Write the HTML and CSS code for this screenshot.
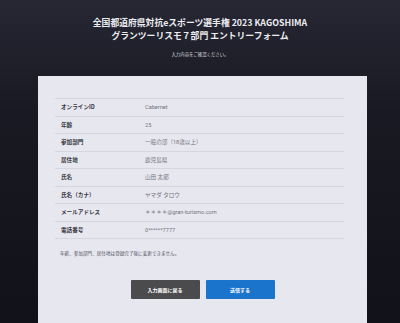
FILE: index.html
```html
<!DOCTYPE html>
<html lang="ja">
<head>
<meta charset="utf-8">
<title>エントリーフォーム 確認</title>
<link rel="stylesheet" href="styles.css">
</head>
<body>
<div class="page">
  <header class="head">
    <h1 class="title">全国都道府県対抗eスポーツ選手権 2023 KAGOSHIMA<br>グランツーリスモ７部門 エントリーフォーム</h1>
    <p class="lead">入力内容をご確認ください。</p>
  </header>
  <main class="card">
    <dl class="table">
      <div class="row"><dt>オンラインID</dt><dd>Cabernet</dd></div>
      <div class="row"><dt>年齢</dt><dd>25</dd></div>
      <div class="row"><dt>参加部門</dt><dd>一般の部（18歳以上）</dd></div>
      <div class="row"><dt>居住地</dt><dd>鹿児島県</dd></div>
      <div class="row"><dt>氏名</dt><dd>山田 太郎</dd></div>
      <div class="row"><dt>氏名（カナ）</dt><dd>ヤマダ タロウ</dd></div>
      <div class="row"><dt>メールアドレス</dt><dd>＊＊＊＊@gran-turismo.com</dd></div>
      <div class="row"><dt>電話番号</dt><dd>0******7777</dd></div>
    </dl>
    <p class="note">年齢、参加部門、居住地は登録完了後に変更できません。</p>
    <div class="actions">
      <button class="btn btn-back" type="button">入力画面に戻る</button>
      <button class="btn btn-send" type="button">送信する</button>
    </div>
  </main>
</div>
</body>
</html>
```
FILE: styles.css
```css
html, body {
  margin: 0;
  padding: 0;
}
body {
  width: 400px;
  height: 323px;
  overflow: hidden;
  background: linear-gradient(180deg, #262733 0%, #181922 35%, #111219 100%);
  font-family: "Noto Sans CJK JP", "Noto Sans", "Liberation Sans", sans-serif;
}
.page {
  display: flex;
  flex-direction: column;
  height: 323px;
}
.head {
  padding-top: 17px;
  text-align: center;
  color: #ececf0;
}
.title {
  margin: 0;
  font-size: 8.8px;
  line-height: 12.5px;
  font-weight: 700;
}
.lead {
  margin: 9px 0 0;
  font-size: 4.4px;
  line-height: 6px;
  color: #d6d6dc;
}
.card {
  flex: 1;
  margin: 19px 33px 0 38px;
  padding: 22px 23px 0 17px;
  background: #e7e7f0;
}
.table {
  margin: 0;
  border-top: 1px solid #d6d6e0;
}
.row {
  display: flex;
  align-items: center;
  height: 16.5px;
  border-bottom: 1px solid #d6d6e0;
  font-size: 5.6px;
}
.row dt {
  width: 84px;
  padding-left: 6px;
  font-weight: 700;
  color: #3a3a42;
}
.row dd {
  margin: 0;
  color: #74747c;
  font-family: "Roboto", "Noto Sans CJK JP", sans-serif;
}
.note {
  margin: 11px 0 0;
  padding-left: 5px;
  font-size: 4.6px;
  line-height: 6px;
  color: #55555e;
}
.actions {
  display: flex;
  justify-content: center;
  gap: 6px;
  margin-top: 24px;
  padding-left: 6px;
}
.btn {
  width: 69px;
  height: 19px;
  border: 0;
  border-radius: 1px;
  padding: 0;
  color: #ffffff;
  font-family: "Noto Sans CJK JP", sans-serif;
  font-size: 5px;
  font-weight: 700;
}
.btn-back {
  background: #4b4b4d;
}
.btn-send {
  background: #1a74cc;
}
```
